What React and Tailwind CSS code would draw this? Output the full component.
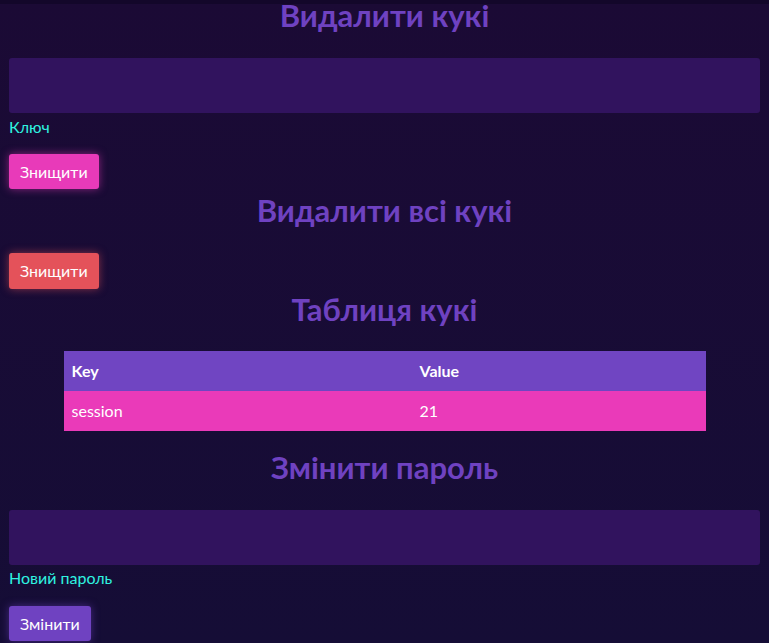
export default function App() {
  const font = { fontFamily: 'Lato, "Noto Sans", sans-serif' };
  return (
    <div className="min-h-[643px] w-full bg-gradient-to-b from-[#1b0a35] to-[#150d36] overflow-hidden" style={font}>
      <div className="h-[4px] bg-[#13072a]" />
      <div className="px-[9px] flex flex-col">
        <h2 className="mt-[-7px] h-[36px] leading-[36px] text-center text-[31px] font-bold text-[#6f42c1]">Видалити кукі</h2>
        <div className="mt-[25px] h-[55px] rounded-[3px] bg-[#31135e]" />
        <div className="mt-[3px] h-[21px] leading-[21px] text-[16px] text-[#2ff3e0]">Ключ</div>
        <div className="mt-[17px]">
          <button className="h-[35px] px-[11px] rounded-[3px] bg-[#e83ab9] text-white text-[16px] shadow-[0_0_8px_rgba(232,58,185,0.55)]">Знищити</button>
        </div>
        <h2 className="mt-[3px] h-[36px] leading-[36px] text-center text-[31px] font-bold text-[#6f42c1]">Видалити всі кукі</h2>
        <div className="mt-[25px]">
          <button className="h-[36px] px-[11px] rounded-[3px] bg-[#e4525a] text-white text-[16px] shadow-[0_0_8px_rgba(228,82,90,0.55)]">Знищити</button>
        </div>
        <h2 className="mt-[2px] h-[36px] leading-[36px] text-center text-[31px] font-bold text-[#6f42c1]">Таблиця кукі</h2>
        <div className="mt-[24px] flex justify-center">
          <table className="w-[642px] border-collapse text-[16px] text-white">
            <thead>
              <tr className="bg-[#7045c2] h-[40px]">
                <th className="w-[348px] text-left font-bold pl-[8px]">Key</th>
                <th className="text-left font-bold pl-[8px]">Value</th>
              </tr>
            </thead>
            <tbody>
              <tr className="bg-[#ea3ab9] h-[40px]">
                <td className="pl-[8px]">session</td>
                <td className="pl-[8px]">21</td>
              </tr>
            </tbody>
          </table>
        </div>
        <h2 className="mt-[18px] h-[36px] leading-[36px] text-center text-[31px] font-bold text-[#6f42c1]">Змінити пароль</h2>
        <div className="mt-[25px] h-[55px] rounded-[3px] bg-[#31135e]" />
        <div className="mt-[2px] h-[21px] leading-[21px] text-[16px] text-[#2ff3e0]">Новий пароль</div>
        <div className="mt-[18px]">
          <button className="h-[35px] px-[11px] rounded-[3px] bg-[#6f42c1] text-white text-[16px] shadow-[0_0_8px_rgba(111,66,193,0.55)]">Змінити</button>
        </div>
      </div>
    </div>
  );
}
